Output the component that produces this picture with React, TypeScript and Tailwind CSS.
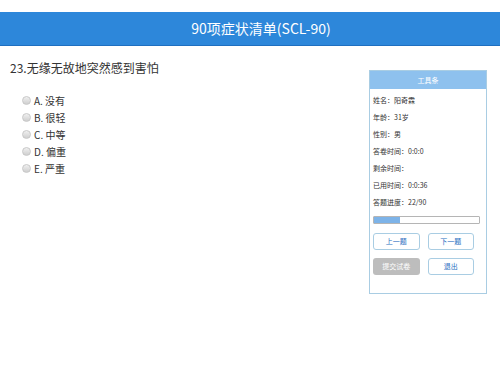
const options = ["A. 没有", "B. 很轻", "C. 中等", "D. 偏重", "E. 严重"];

const info = [
  "姓名：阳奇霖",
  "年龄：31岁",
  "性别：男",
  "答卷时间：0:0:0",
  "剩余时间：",
  "已用时间：0:0:36",
  "答题进度：22/90",
];

export default function App() {
  const done = 22;
  const total = 90;

  return (
    <div className="w-[500px] h-[375px] bg-white overflow-hidden" style={{ fontFamily: '"Noto Sans CJK SC", "Liberation Sans", sans-serif' }}>
      <div className="h-[12px]" />
      <div className="h-[34px] bg-[#2d87da] border-b border-[#1f6fc0] flex items-center justify-center pl-[22px] text-white text-[14px]">
        90项症状清单(SCL-90)
      </div>

      <div className="flex">
        <div className="flex-1 pl-[10px] pt-[14px]">
          <div className="text-[12px] text-[#333] leading-[16px]">23.无缘无故地突然感到害怕</div>
          <div className="mt-[17px] pl-[12px] flex flex-col gap-[3px]">
            {options.map((o) => (
              <div key={o} className="flex items-center h-[14px] text-[10px] text-[#333]">
                <span className="w-[9px] h-[9px] rounded-full bg-gradient-to-b from-[#f0f0f0] to-[#cfcfcf] border border-[#c8c8c8] mr-[3px]" />
                {o}
              </div>
            ))}
          </div>
        </div>

        <div className="w-[118px] mt-[24px] mr-[13px] h-[224px] border border-[#a9cde3] flex flex-col">
          <div className="h-[18px] bg-[#8ec1ee] flex items-center justify-center text-white text-[7px]">工具条</div>
          <div className="px-[3px] pt-[3px] flex flex-col">
            {info.map((t) => (
              <div key={t} className="h-[17px] flex items-center text-[7px] text-[#333]">{t}</div>
            ))}
            <div className="mt-[5px] h-[8px] w-[107px] border border-[#b5b5b5] rounded-[1px] bg-white">
              <div className="h-full bg-[#7db3e8]" style={{ width: `${(done / total) * 100}%` }} />
            </div>
            <div className="mt-[9px] grid grid-cols-2 gap-x-[8px] gap-y-[8px] w-[101px]">
              <button className="h-[17px] border border-[#a9cde3] rounded-[3px] bg-white text-[#2a6fbf] text-[7px]">上一题</button>
              <button className="h-[17px] border border-[#a9cde3] rounded-[3px] bg-white text-[#2a6fbf] text-[7px]">下一题</button>
              <button className="h-[17px] rounded-[3px] bg-[#bdbdbd] text-white text-[7px]">提交试卷</button>
              <button className="h-[17px] border border-[#a9cde3] rounded-[3px] bg-white text-[#2a6fbf] text-[7px]">退出</button>
            </div>
          </div>
        </div>
      </div>
    </div>
  );
}
